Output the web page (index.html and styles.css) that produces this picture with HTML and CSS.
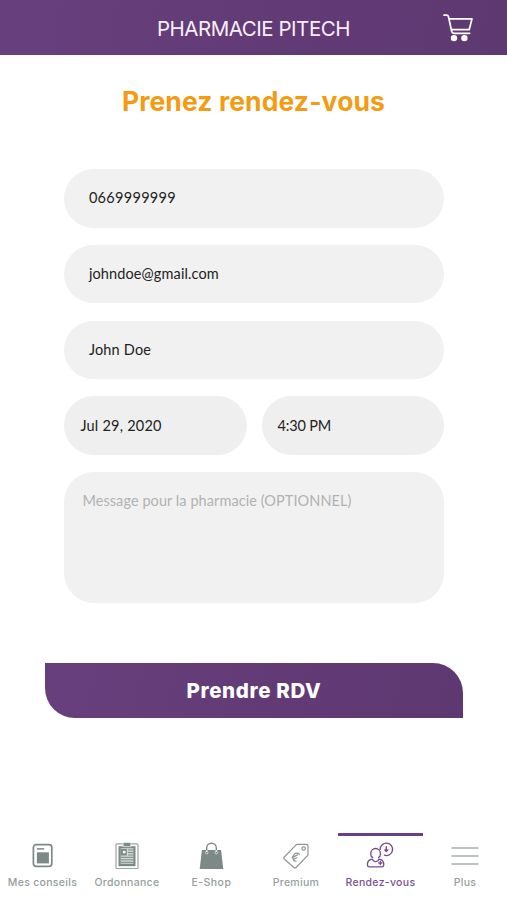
FILE: index.html
```html
<!DOCTYPE html>
<html lang="fr">
<head>
<meta charset="utf-8">
<meta name="viewport" content="width=device-width, initial-scale=1">
<title>Pharmacie Pitech</title>
<link rel="stylesheet" href="styles.css">
</head>
<body>
<header class="topbar">
  <div class="brand">PHARMACIE PITECH</div>
  <svg class="cart" width="30" height="28" viewBox="0 0 30 28" fill="none" stroke="#fff" stroke-width="1.7" stroke-linecap="round" stroke-linejoin="round">
    <path d="M1 1.2h2.6q1.5 0 1.9 1.5l3.2 14.8q.4 1.8 2.2 1.8h15.8M6 4.8h23l-2.8 10.9H8.5"/>
    <circle cx="11" cy="24.1" r="3.2" fill="#fff" stroke="none"/>
    <circle cx="21.4" cy="24.1" r="3.2" fill="#fff" stroke="none"/>
  </svg>
</header>
<main class="page">
  <h1 class="title"><span>Prenez rendez-vous</span></h1>
  <form class="form">
    <div class="field"><span class="phone">0669999999</span></div>
    <div class="field"><span class="email">johndoe@gmail.com</span></div>
    <div class="field"><span class="name">John Doe</span></div>
    <div class="row">
      <div class="field compact"><span class="date">Jul 29, 2020</span></div>
      <div class="field compact"><span class="time">4:30 PM</span></div>
    </div>
    <div class="message"><span class="hint">Message pour la pharmacie (OPTIONNEL)</span></div>
  </form>
  <button class="submit" type="button"><span>Prendre RDV</span></button>
</main>
<nav class="tabs">
  <a class="tab">
    <svg class="icon" width="28" height="28" viewBox="0 0 28 28" fill="none" stroke="#7c8986">
      <rect x="5.4" y="2.7" width="18.4" height="21.6" rx="2.8" stroke-width="1.7"/>
      <path d="M8.9 6.9h7.3" stroke-width="1.5"/>
      <rect x="8.9" y="10.3" width="12" height="11.1" fill="#7c8986" stroke="none"/>
    </svg>
    <span class="label">Mes conseils</span>
  </a>
  <a class="tab">
    <svg class="icon" width="28" height="28" viewBox="0 0 28 28" fill="none" stroke="#7c8986">
      <rect x="3" y="1.9" width="22" height="24.6" rx="1" stroke="#9aa4a2" stroke-width="1.2"/>
      <path d="M5.5 4.2h17v20h-17z" fill="#7c8986" stroke="none"/>
      <path d="M7.7 6.2h12.6v15.6H7.7z" fill="#d3d9d6" stroke="none"/>
      <path d="M10.2 0.5h7.6v4.1h-7.6z" fill="#7c8986" stroke="#f3f6f5" stroke-width=".7"/>
      <path d="M7.8 7h6v6.5h-6z" fill="#7c8986" stroke="none"/>
      <circle cx="11.2" cy="10" r="1.6" fill="#f4f6f5" stroke="none"/>
      <path d="M15 8h5M15 10.5h5M15 13h5M8 15.3h12M8 17.8h12M8 20.3h12" stroke-width="1"/>
    </svg>
    <span class="label">Ordonnance</span>
  </a>
  <a class="tab">
    <svg class="icon" width="28" height="28" viewBox="0 0 28 28" fill="none" stroke="#7c8986">
      <path d="M4.9 8h19.2l2.2 19H2.700z" fill="#7c8986" stroke="none"/>
      <path d="M9.700 8.500V6a4.800 4.800 0 0 1 9.600 0v2.500" stroke-width="1.4"/>
      <path d="M9.700 8v2M19.300 8v2" stroke="#dfe5e2" stroke-width="1.5"/>
      <circle cx="9.700" cy="10.600" r="1.3" stroke="#dfe5e2" stroke-width=".8"/>
      <circle cx="19.300" cy="10.600" r="1.3" stroke="#dfe5e2" stroke-width=".8"/>
    </svg>
    <span class="label shop">E-Shop</span>
  </a>
  <a class="tab">
    <svg class="icon" width="28" height="28" viewBox="0 0 28 28" fill="none" stroke="#8c9694" stroke-width="1.2" stroke-linejoin="round" stroke-linecap="round">
      <path d="M14.6 2.3h9.8q1.6 0 1.6 1.6v9.3L14 25.5q-1 1-2 0L2.2 17q-1-1 0-2z"/>
      <circle cx="21.6" cy="6.5" r="1.7"/>
      <path d="M17.6 12.2q-2.8-2.2-5.4.2-2.4 2.8-.6 5.8.8 1.2 2.4 1M10.2 15.6l5.6-2.8M11.2 17.6l3.6-1.8"/>
    </svg>
    <span class="label">Premium</span>
  </a>
  <a class="tab active">
    <svg class="icon" width="28" height="28" viewBox="0 0 28 28" fill="none" stroke="#784b8c" stroke-width="1.35" stroke-linecap="round" stroke-linejoin="round">
      <path d="M14.2 7.4a6.2 6.2 0 1 1 4.2 5.8"/>
      <path d="M20.3 4.6v4.5M18.8 7.8l1.5 1.8 1.5-1.8z"/>
      <path d="M6.6 15.4q-1.8-.8-1.8-2.9V11.2a4.8 4.7 0 0 1 9.6 0v1.3q0 2.1-1.8 2.9"/>
      <path d="M6.4 17.2q-4.5.6-4.9 4.2v1.9q.1 1.6 1.9 1.6h12.4q1.8 0 1.900-1.600v-1.900q-.4-3.600-4.900-4.200-.6 2.300-3.200 2.400-2.600-.1-3.200-2.400z"/>
      <path d="M12.7 21h3.2M14.3 19.4v3.2"/>
    </svg>
    <span class="label">Rendez-vous</span>
  </a>
  <a class="tab">
    <svg class="icon" width="28" height="28" viewBox="0 0 28 28" fill="none" stroke="#a5afac" stroke-width="1.5">
      <path d="M.5 6h27M.5 14h27M.5 22h27"/>
    </svg>
    <span class="label">Plus</span>
  </a>
</nav>
</body>
</html>
```
FILE: styles.css
```css
* { box-sizing: border-box; }
body {
  margin: 0;
  height: 900px;
  display: flex;
  flex-direction: column;
  background: #fff;
  font-family: Inter, sans-serif;
  overflow: hidden;
}
.topbar {
  height: 54.5px;
  flex: none;
  display: grid;
  grid-template-columns: 1fr auto 1fr;
  align-items: center;
  padding: 1px 34px 0;
  background: linear-gradient(100deg, #673f7c, #5e3871);
}
.brand {
  grid-column: 2;
  color: #f8effb;
  font-size: 20.5px;
  line-height: 24px;
  letter-spacing: -0.47px;
  padding-top: 2px;
}
.cart { justify-self: end; }
.page { flex: 1; display: flex; flex-direction: column; }
.title {
  margin: 29.5px 0 50px;
  height: 35px;
  line-height: 35px;
  font-size: 26.5px;
  font-weight: 700;
  letter-spacing: 0.1px;
  text-align: center;
  color: #f39c12;
}
.form {
  width: 379.4px;
  margin: 0 0 0 64.4px;
  display: flex;
  flex-direction: column;
  gap: 17.1px;
  font-family: Lato, sans-serif;
  font-size: 14.5px;
  color: #222;
}
.field {
  height: 58.7px;
  border-radius: 30px;
  background: #f1f1f1;
  display: flex;
  align-items: center;
  padding: 0 24.5px 1px;
}
.phone { letter-spacing: 0.3px; }
.email { letter-spacing: 0.12px; }
.name { letter-spacing: 0.18px; }
.date { letter-spacing: 0.23px; }
.time { letter-spacing: -0.2px; }
.hint { letter-spacing: 0.07px; }
.row { display: grid; grid-template-columns: 1fr 1fr; gap: 15px; }
.compact { padding: 0 16px 1px; background: #efefef; }
.message {
  height: 131px;
  border-radius: 30px;
  background: #f1f1f1;
  padding: 20px 18px;
  line-height: 18px;
  color: #b1b1b1;
}
.submit {
  width: 418px;
  height: 55px;
  margin: 59.8px 0 0 45px;
  padding: 0;
  border: 0;
  border-radius: 0 30px 0 30px;
  background: linear-gradient(100deg, #673f7c, #5e3871);
  color: #fff;
  font-family: Inter, sans-serif;
  font-size: 20.5px;
  font-weight: 800;
  letter-spacing: 0.65px;
}
.tabs {
  height: 67.5px;
  flex: none;
  display: grid;
  grid-template-columns: repeat(6, 1fr);
}
.tab {
  display: flex;
  flex-direction: column;
  align-items: center;
  border-top: 3px solid transparent;
  padding-top: 6.4px;
  padding-left: 0.4px;
  color: #969e9c;
}
.active { border-color: #6b3f82; color: #7c5191; }
.icon { flex: none; }
.label {
  margin-top: 5.4px;
  font-size: 10.5px;
  font-weight: 500;
  line-height: 15px;
  letter-spacing: 0.3px;
  white-space: nowrap;
}
.shop { letter-spacing: 0.45px; }
```
